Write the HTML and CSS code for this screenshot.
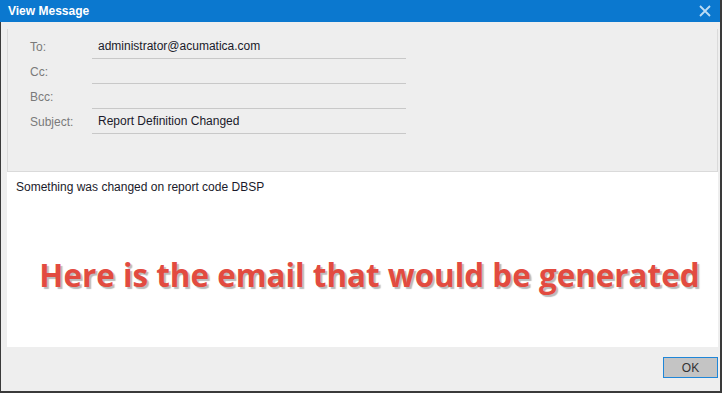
FILE: index.html
```html
<!DOCTYPE html>
<html lang="en">
<head>
  <meta charset="UTF-8" />
  <title>View Message</title>
  <link rel="stylesheet" href="styles.css">
</head>
<body>
  <div class="dialog">
    <div class="titlebar">
      <span class="title">View Message</span>
      <svg class="close" width="12" height="12" viewBox="0 0 12 12">
        <path d="M1 1 L11 11 M11 1 L1 11" stroke="#bcdcf4" stroke-width="1.8" fill="none" />
      </svg>
    </div>

    <div class="content">
      <div class="header">
        <div class="row">
          <span class="label">To:</span>
          <span class="value">administrator@acumatica.com</span>
        </div>
        <div class="row">
          <span class="label">Cc:</span>
          <span class="value"></span>
        </div>
        <div class="row">
          <span class="label">Bcc:</span>
          <span class="value"></span>
        </div>
        <div class="row">
          <span class="label">Subject:</span>
          <span class="value">Report Definition Changed</span>
        </div>
      </div>

      <div class="message">
        <p class="text">Something was changed on report code DBSP</p>
        <div class="note">Here is the email that would be generated</div>
      </div>
    </div>

    <div class="footer">
      <button class="ok">OK</button>
    </div>
  </div>
</body>
</html>
```

FILE: styles.css
```css
body {
  margin: 0;
  font-family: "Liberation Sans", Arial, sans-serif;
  font-size: 12px;
  background: #fff;
}
.dialog {
  width: 722px;
  height: 393px;
  box-sizing: border-box;
  background: #eeeeee;
  border-left: 1px solid #3a3a3a;
  border-right: 2px solid #3a3a3a;
  border-bottom: 2px solid #3a3a3a;
  display: flex;
  flex-direction: column;
}
.titlebar {
  height: 22px;
  background: #0b78cf;
  display: flex;
  align-items: center;
  justify-content: space-between;
  padding: 0 9px 0 8px;
  margin-left: -1px;
}
.title {
  color: #fff;
  font-weight: bold;
  font-size: 12px;
}
.content {
  flex: 1;
  padding: 7px 2px 0 6px;
  display: flex;
  flex-direction: column;
}
.header {
  height: 137px;
  border: 1px solid #dadada;
  border-top: none;
  padding: 5px 0 0 22px;
}
.row {
  display: flex;
  height: 25px;
  align-items: center;
}
.label {
  width: 62px;
  color: #7a7a7a;
}
.value {
  width: 308px;
  height: 24px;
  line-height: 25px;
  padding-left: 6px;
  border-bottom: 1px solid #c8c8c8;
  color: #1a1a2a;
}
.message {
  flex: 1;
  background: #fff;
  display: flex;
  flex-direction: column;
}
.text {
  margin: 0;
  padding: 8px 0 0 9px;
  line-height: 15px;
  color: #1a1a2a;
}
.note {
  flex: 1;
  display: flex;
  align-items: center;
  justify-content: center;
  padding: 6px 0 0 14px;
  font-family: "Open Sans", sans-serif;
  font-weight: bold;
  font-size: 31.4px;
  color: #e24b40;
  text-shadow: 2px 2px 1px #bbbbbb;
}
.footer {
  height: 44px;
  display: flex;
  justify-content: flex-end;
  align-items: flex-start;
  padding: 10px 2px 0 0;
  box-sizing: border-box;
}
.ok {
  width: 55px;
  height: 21px;
  background: #c4c4c4;
  border: 1px solid #1f86d8;
  font-family: "Liberation Sans", Arial, sans-serif;
  font-size: 12px;
  color: #333;
  padding: 0;
}
```
